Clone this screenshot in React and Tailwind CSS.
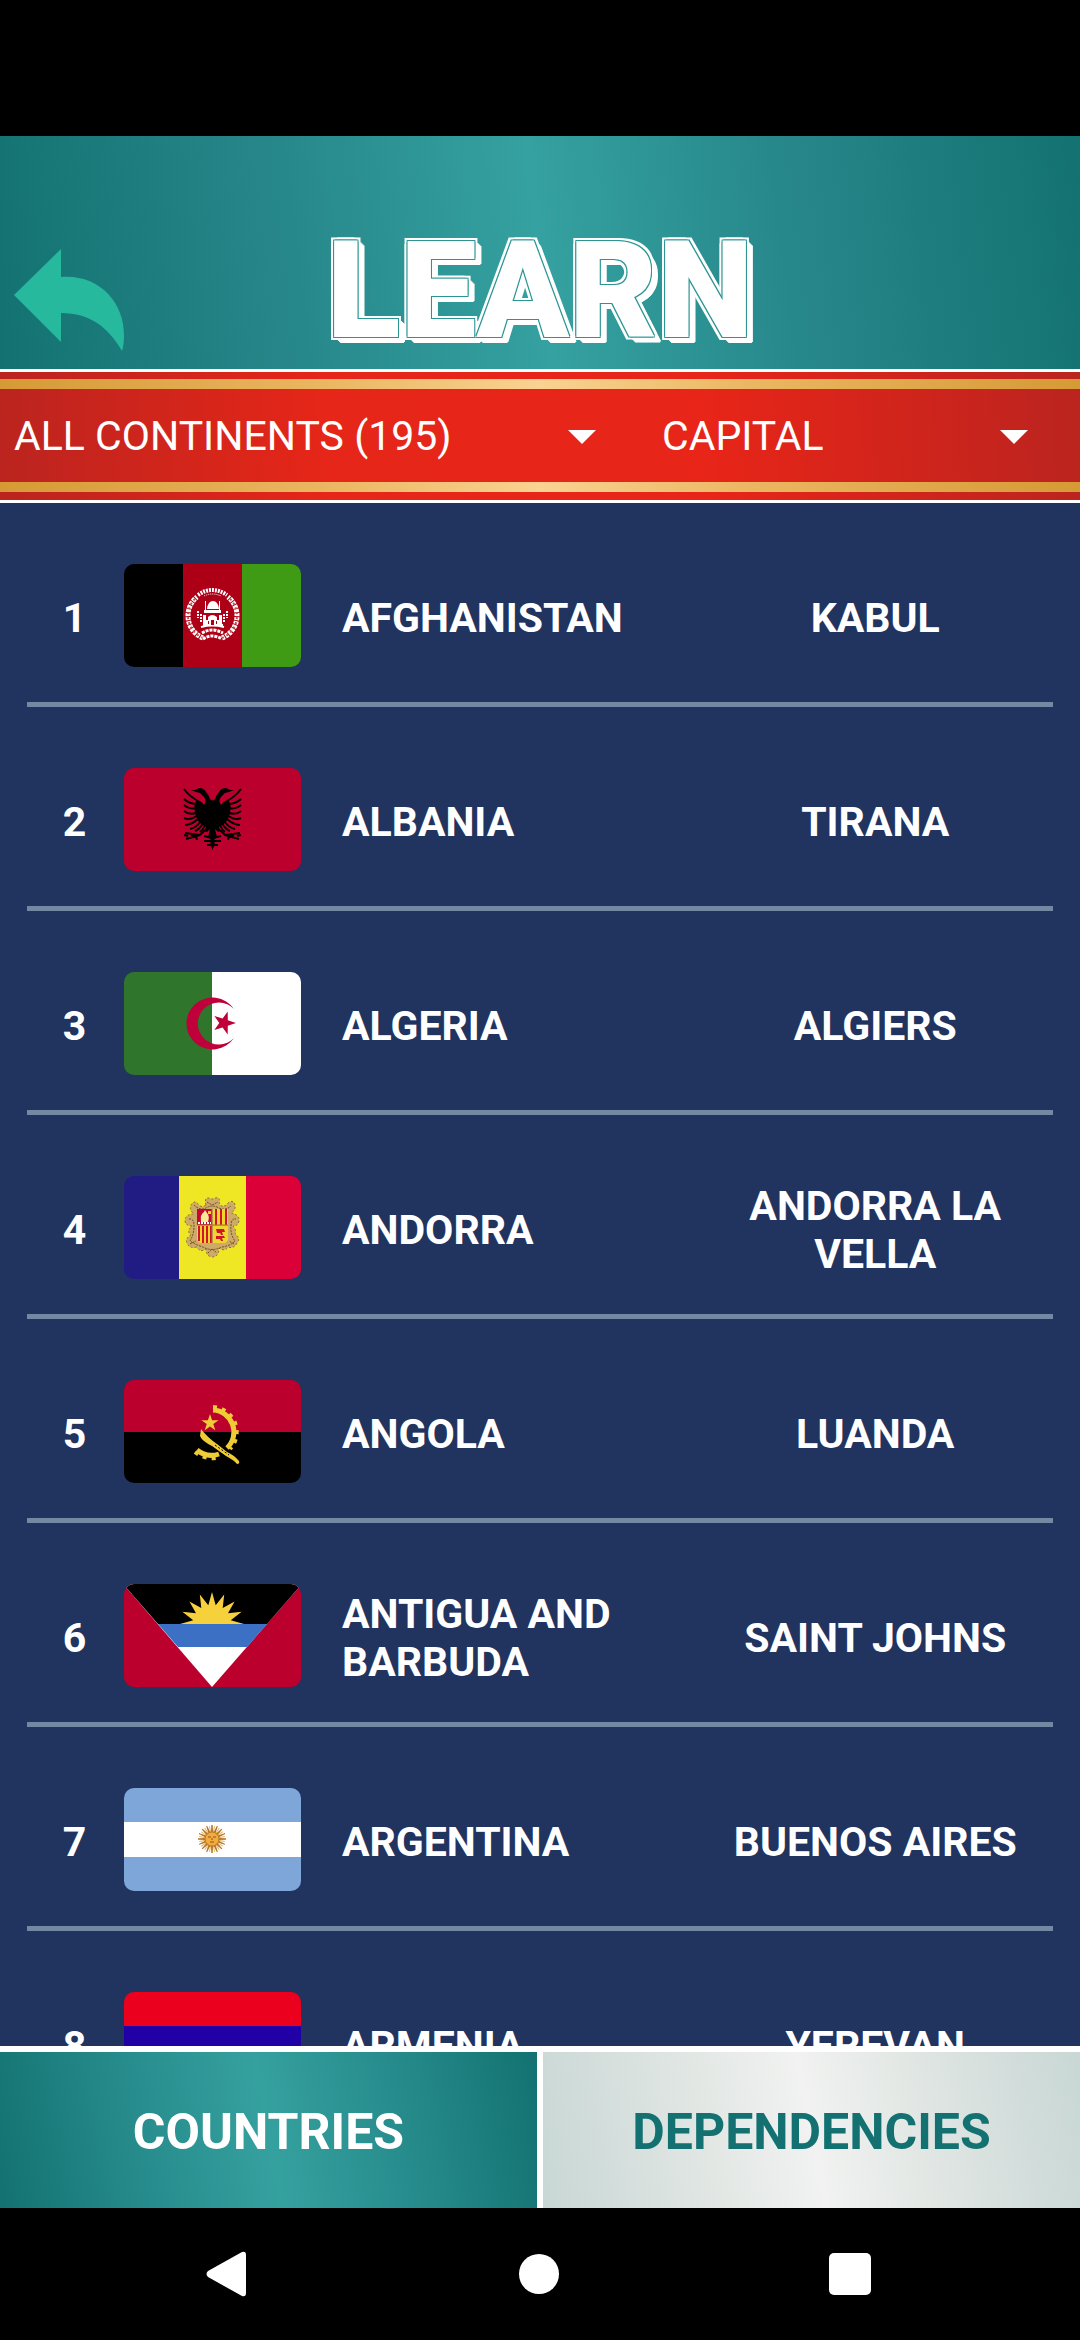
import React from "react";

function starPoints(cx, cy, r, rotation, inner = 0.39, tips = 5) {
  const points = [];
  for (let i = 0; i < tips * 2; i++) {
    const radius = i % 2 ? r * inner : r;
    const a = ((rotation + (i * 180) / tips) * Math.PI) / 180;
    points.push(`${(cx + radius * Math.cos(a)).toFixed(1)},${(cy + radius * Math.sin(a)).toFixed(1)}`);
  }
  return points.join(" ");
}

function Afghanistan() {
  return (
    <>
      <rect width="59" height="103" fill="#000" />
      <rect x="59" width="59" height="103" fill="#ad0017" />
      <rect x="118" width="59" height="103" fill="#3f9b13" />
      <g fill="none" stroke="#fff">
        <path d="M79 74A24 24 0 0 1 73 33M98 74A24 24 0 0 0 104 33" strokeWidth="5" strokeDasharray="3 1" />
        <path d="M79 74A24 24 0 0 1 73 33M98 74A24 24 0 0 0 104 33" stroke="#c4544a" strokeWidth="2" strokeDasharray="2 3" />
        <path d="M74 31Q88 21 103 31" strokeWidth="4" strokeDasharray="2 1" />
        <path d="M80 32Q88 28 97 32" strokeWidth="1" strokeDasharray="1 1" />
        <path d="M78 69Q88 63 99 69M79 75Q88 69 98 75" strokeWidth="3" strokeDasharray="3 1" />
        <path d="M77 63Q88 60 100 63" strokeWidth="2" />
        <path d="M74 47v7M103 47v7M77 50v8M100 50v8" strokeWidth="2" strokeDasharray="2 1" />
      </g>
      <g fill="#fff">
        <path d="M80 46h17v3H80zM83 45q1-8 6-8t6 8zM81 37h1v9h-1zM95 37h1v9h-1z" />
        <path d="M79 51h3v10h-3zM95 51h3v10h-3zM84 53q4-4 9 0v3h2v5H82v-5h2z" />
        <path d="M79 60h20v2H79z" />
      </g>
      <path d="M87 56h3v5h-3zM84 57h1v3h-1zM92 57h1v3h-1z" fill="#ad0017" />
    </>
  );
}

function EagleHalf() {
  return (
    <>
      <path d="M89 33L86 31Q85 27 82 24Q80 20 75 20L71 22L67 22L72 24L76 25L80 29Q83 33 80 37Q78 33 73 32Q69 36 71 44Q72 51 76 55L82 59L80 63L83 64L86 61L84 69L87 72L86 77L89 82Z" />
      <g fill="none" stroke="#000" strokeWidth="2">
        <path d="M60 21Q65 28 74 33M60 31Q65 36 74 36M60 37Q66 42 74 40M60 43Q66 48 74 44M60 50Q66 53 74 47M61 57Q68 57 75 50M66 61Q72 60 77 53M71 63Q76 61 79 55M76 64Q79 62 81 57" />
        <path d="M81 62L76 67L61 65M76 67L62 71M76 67L67 67M72 68L73 72M60 67L64 68" />
        <path d="M88 70L80 68M88 73L80 73M88 77L83 77" />
      </g>
    </>
  );
}

function Albania() {
  return (
    <>
      <rect width="177" height="103" fill="#bc002d" />
      <EagleHalf />
      <g transform="translate(177 0) scale(-1 1)">
        <EagleHalf />
      </g>
    </>
  );
}

function Algeria() {
  return (
    <>
      <rect width="88" height="103" fill="#30752c" />
      <rect x="88" width="89" height="103" fill="#fff" />
      <path d="M110 37A26 26 0 1 0 110 66A21 21 0 1 1 110 37Z" fill="#bf003a" />
      <polygon points={starPoints(100, 51, 12, 0)} fill="#bf003a" />
    </>
  );
}

function Andorra() {
  return (
    <>
      <rect width="55" height="103" fill="#211b84" />
      <rect x="55" width="67" height="103" fill="#efe723" />
      <rect x="122" width="55" height="103" fill="#dc0038" />
      <path
        d="M82 29Q80 21 85 22Q88 24 91 22Q97 20 95 29Q101 32 104 27Q110 23 111 29Q112 34 107 37Q116 39 115 45Q114 50 109 50Q113 55 111 58Q117 62 113 67Q110 73 104 71Q101 76 95 72Q95 81 88 81Q82 80 82 73Q76 77 73 71Q65 73 63 67Q61 62 67 59Q62 55 68 50Q61 50 61 44Q62 38 70 38Q65 34 67 29Q71 23 75 29Q78 32 82 29Z"
        fill="#cdab67"
        stroke="#8a6a35"
        strokeWidth="1"
        strokeDasharray="2 2"
      />
      <path
        d="M70 29Q76 35 82 32Q88 28 95 32Q101 35 107 30M65 43Q70 42 70 50Q70 58 66 65Q72 69 79 71Q88 76 98 71Q106 70 111 65Q106 58 107 50Q107 42 112 43M83 26L88 29L94 26M84 77L88 73L93 77M66 68L72 65M110 68L105 65"
        fill="none"
        stroke="#6d4a26"
        strokeWidth="1"
        strokeDasharray="2 1"
      />
      <path d="M73 33H88V49H73Z" fill="#c9082f" />
      <path d="M89 33H104V49H89ZM73 50H88V67H76L73 64ZM89 50H104V64L101 67H89Z" fill="#f0d62b" />
      <path d="M92 33v16M97 33v16M102 33v16M75 50v15M79 50v17M83 50v17M87 50v17" stroke="#cf142b" strokeWidth="2" />
      <path d="M77 46Q76 38 80 36L81 34L83 37Q86 40 84 46Z" fill="#f8ec9a" />
      <path d="M84 35h3v3h-3z" fill="#f0d62b" />
      <path d="M74 47h13" stroke="#fff" strokeWidth="2" strokeDasharray="2 1" />
      <path d="M92 53h8l1 3h-3l1 3h-2l-1-2h-3zM92 60h8l1 2h-3l1 3h-2l-1-2h-4z" fill="#cf142b" />
      <path d="M88 33V67M73 49H104" stroke="#a57a30" strokeWidth="1" />
    </>
  );
}

function Angola() {
  return (
    <>
      <rect width="177" height="52" fill="#bc002d" />
      <rect y="52" width="177" height="51" fill="#000" />
      <g fill="none" stroke="#efcb35">
        <path d="M89 30A22 22 0 0 1 103 68M73 70A23 23 0 0 0 95 74" strokeWidth="5" />
        <path d="M89 27A25 25 0 0 1 106 69M71 72A27 27 0 0 0 96 77" strokeWidth="4" strokeDasharray="4 5" />
      </g>
      <polygon points={starPoints(86, 43, 9, -90)} fill="#efcb35" />
      <path d="M77 49Q84 58 93 64L103 72Q110 75 115 81Q116 84 113 84Q111 81 102 76L88 66Q78 61 76 56Z" fill="#efcb35" />
      <path d="M91 65L105 75" stroke="#000" strokeWidth="1" strokeDasharray="2 2" />
    </>
  );
}

function Antigua() {
  return (
    <>
      <rect width="177" height="103" fill="#bc002d" />
      <path d="M0 0H177V1L88 103L0 1Z" fill="#fff" />
      <path d="M0 0H177V1L143 40H34L0 1Z" fill="#000" />
      <path d="M34 40H143L123 63H54Z" fill="#3b70c4" />
      <clipPath id="horizon">
        <rect width="177" height="40" />
      </clipPath>
      <polygon points={starPoints(88, 40, 32, -90, 0.6, 16)} fill="#f7d13c" clipPath="url(#horizon)" />
    </>
  );
}

function Argentina() {
  return (
    <>
      <rect width="177" height="103" fill="#7fa6d8" />
      <rect y="34" width="177" height="35" fill="#fff" />
      <g transform="translate(88 51)">
        {Array.from({ length: 16 }, (_, i) => (
          <g key={i} transform={`rotate(${i * 22.5})`}>
            <path d="M-1 0L0 -14L1 0Z" fill="#b3762c" stroke="#b3762c" strokeWidth="1" />
            <path d="M0 -6V-13" stroke="#e9b551" strokeWidth="1" transform="rotate(11)" />
          </g>
        ))}
        <circle r="7" fill="#f3ab3c" stroke="#b8792c" strokeWidth="1" />
        <path d="M-4 -2h3M1 -2h3M0 -1v2M-2 3h4" stroke="#8f5426" strokeWidth="1" fill="none" />
      </g>
    </>
  );
}

function Armenia() {
  return (
    <>
      <rect width="177" height="34" fill="#eb001d" />
      <rect y="34" width="177" height="35" fill="#2100a5" />
      <rect y="69" width="177" height="34" fill="#f2a800" />
    </>
  );
}

const countries = [
  { name: "AFGHANISTAN", capital: "KABUL", Flag: Afghanistan },
  { name: "ALBANIA", capital: "TIRANA", Flag: Albania },
  { name: "ALGERIA", capital: "ALGIERS", Flag: Algeria },
  { name: "ANDORRA", capital: "ANDORRA LA VELLA", Flag: Andorra },
  { name: "ANGOLA", capital: "LUANDA", Flag: Angola },
  { name: "ANTIGUA AND BARBUDA", capital: "SAINT JOHNS", Flag: Antigua },
  { name: "ARGENTINA", capital: "BUENOS AIRES", Flag: Argentina },
  { name: "ARMENIA", capital: "YEREVAN", Flag: Armenia },
];

function Header() {
  return (
    <header className="grid h-[233px] shrink-0 grid-cols-[1fr_auto_1fr] items-end bg-[linear-gradient(83deg,#137271_0%,#268689_26%,#35a1a0_50%,#268689_74%,#137271_100%)] px-3.5 pb-[18px]">
      <button type="button" aria-label="Back" className="w-[110px]">
        <svg viewBox="0 0 110 102" className="block w-full" fill="#26b99e">
          <path d="M0 46L47 0V28C84 25 110 52 110 86Q110 96 108 102C94 78 76 64 47 64V93Z" />
        </svg>
      </button>
      <h1 className="text-[136px] leading-[120px] font-black text-white [text-shadow:1px_1px_0_#2b9594,-1px_1px_0_#2b9594,1px_-1px_0_#2b9594,-1px_-1px_0_#2b9594,3px_3px_0_#fff,-3px_3px_0_#fff,3px_-3px_0_#fff,-3px_-3px_0_#fff,4px_2px_0_#fff,5px_3px_0_#fff,6px_4px_0_#fff,7px_5px_0_#fff,4px_4px_0_#fff,5px_5px_0_#fff,6px_6px_0_#fff]">
        LEARN
      </h1>
    </header>
  );
}

function Picker({ label, value, options }) {
  return (
    <label className="relative flex items-center">
      <select
        aria-label={label}
        defaultValue={value}
        className="h-full w-full appearance-none bg-transparent pr-24 pl-3.5 text-[41px] text-white outline-none"
      >
        {options.map((option) => (
          <option key={option}>{option}</option>
        ))}
      </select>
      <svg viewBox="0 0 28 14" className="pointer-events-none absolute right-[52px] w-7" fill="#fff">
        <path d="M0 0H28L14 14Z" />
      </svg>
    </label>
  );
}

function GoldStripe() {
  return <div className="h-2.5 bg-[linear-gradient(90deg,#d69a35_0%,#ebb661_30%,#fad291_50%,#ebb661_70%,#d69a35_100%)]" />;
}

function Filters() {
  return (
    <div className="flex shrink-0 flex-col border-y-[3px] border-white bg-[linear-gradient(87deg,#bb241f_0%,#e52618_30%,#e82518_65%,#bb241f_100%)] pt-[7px] pb-2">
      <GoldStripe />
      <div className="grid h-[93px] grid-cols-[3fr_2fr] pt-0.5">
        <Picker label="Continent" value="ALL CONTINENTS (195)" options={["ALL CONTINENTS (195)"]} />
        <Picker label="Detail" value="CAPITAL" options={["CAPITAL"]} />
      </div>
      <GoldStripe />
    </div>
  );
}

function CountryRow({ index, name, capital, Flag }) {
  const cell = "border-b-[5px] border-[#7389a3] align-middle";
  const textCell = `${cell} pt-[61px] pb-[31px]`;
  return (
    <tr>
      <td className={`${textCell} w-[97px] pr-0.5 text-center`}>{index}</td>
      <td className={`${cell} w-[218px] pt-[61px] pb-[35px]`}>
        <svg viewBox="0 0 177 103" role="img" aria-label={`Flag of ${name}`} className="block w-[177px] rounded-[10px]">
          <Flag />
        </svg>
      </td>
      <th scope="row" className={`${textCell} text-left`}>{name}</th>
      <td className={`${textCell} px-8 text-center`}>{capital}</td>
    </tr>
  );
}

function Tabs() {
  return (
    <div className="grid h-[162px] shrink-0 grid-cols-2 gap-[6px] border-t-[6px] border-white bg-white text-[50px] font-bold">
      <button
        type="button"
        aria-pressed="true"
        className="bg-[linear-gradient(79deg,#137271_0%,#268a8b_25%,#35a19f_50%,#268a8b_75%,#137271_100%)] pt-1 text-white"
      >
        COUNTRIES
      </button>
      <button
        type="button"
        aria-pressed="false"
        className="bg-[linear-gradient(79deg,#c8d7d5_0%,#dfe5e2_28%,#f1f2f1_50%,#dfe5e2_72%,#c8d7d5_100%)] pt-1 text-[#137271]"
      >
        DEPENDENCIES
      </button>
    </div>
  );
}

function SystemNav() {
  return (
    <nav className="flex h-[132px] shrink-0 items-center justify-between bg-black pr-[209px] pl-[205px]">
      <button type="button" aria-label="System back">
        <svg viewBox="0 0 44 46" className="block w-11" fill="#fff">
          <path d="M3 20L37 1Q41 0 41 4V42Q41 46 37 45L3 26Q0 23 3 20Z" />
        </svg>
      </button>
      <button type="button" aria-label="Home" className="size-10 rounded-full bg-white" />
      <button type="button" aria-label="Recent apps" className="size-[42px] rounded-[5px] bg-white" />
    </nav>
  );
}

export default function App() {
  return (
    <div className="flex h-screen flex-col bg-[#21335f] font-[Roboto,sans-serif] text-white">
      <div className="h-[136px] shrink-0 bg-black" />
      <Header />
      <Filters />
      <main className="min-h-0 flex-1 overflow-hidden px-[27px]">
        <table className="w-full table-fixed border-separate border-spacing-0 text-[41px] leading-[48px] font-bold">
          <tbody>
            {countries.map((country, i) => (
              <CountryRow key={country.name} index={i + 1} {...country} />
            ))}
          </tbody>
        </table>
      </main>
      <Tabs />
      <SystemNav />
    </div>
  );
}
